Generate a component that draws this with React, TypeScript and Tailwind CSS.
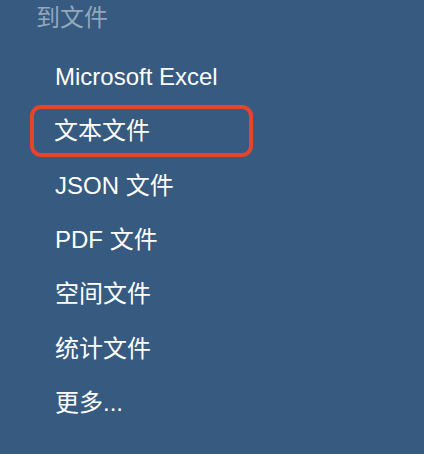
const items = ["Microsoft Excel", "文本文件", "JSON 文件", "PDF 文件", "空间文件", "统计文件", "更多..."];

export default function App() {
  return (
    <div
      className="w-[424px] h-[454px] bg-[#365a80] overflow-hidden"
      style={{ fontFamily: '"Liberation Sans", "Noto Sans CJK SC", sans-serif' }}
    >
      <div className="pl-[36px] pt-[4px] h-[30px] leading-[28px] text-[24px] text-[#94a7bb]">到文件</div>
      <ul className="mt-[20px] flex flex-col">
        {items.map((item, i) => (
          <li key={item} className="h-[54.3px] flex items-center pl-[30px]">
            <div
              className={
                i === 1
                  ? "w-[223px] h-[52px] flex items-center pl-[20px] border-[4.5px] border-[#e5452b] rounded-[11px] text-[24px] text-white -ml-[0px]"
                  : "pl-[25px] text-[24px] text-white"
              }
            >
              {item}
            </div>
          </li>
        ))}
      </ul>
    </div>
  );
}
